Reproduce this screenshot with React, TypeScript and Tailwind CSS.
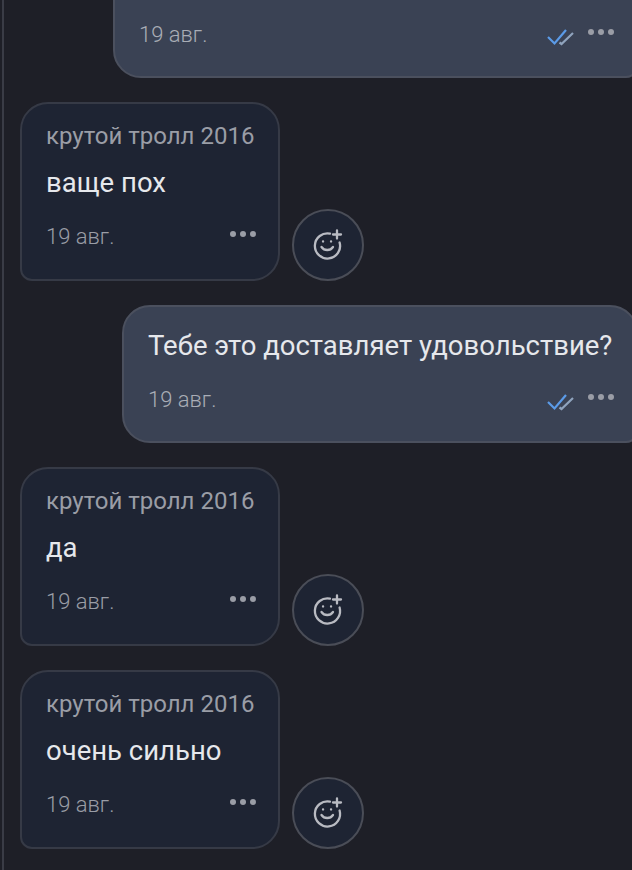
import React from 'react';

function Dots() {
  return (
    <div className="flex gap-[4px] mb-[6px]">
      <span className="w-[6px] h-[6px] rounded-full bg-[#9a9da6]" />
      <span className="w-[6px] h-[6px] rounded-full bg-[#9a9da6]" />
      <span className="w-[6px] h-[6px] rounded-full bg-[#9a9da6]" />
    </div>
  );
}

function Checks() {
  return (
    <svg width="28" height="20" viewBox="0 0 28 20" fill="none" strokeWidth="2.2" className="mr-[13px] mt-[4px]">
      <path d="M1 10 L7.5 16.5 L19 3" stroke="#5b9be8" />
      <path d="M12.5 15.5 L14.5 17 L26 6" stroke="#8fa3bd" />
    </svg>
  );
}

function ReactButton() {
  return (
    <button className="w-[72px] h-[72px] rounded-full border-2 border-[#4a4d57] bg-[#1e2433] flex items-center justify-center">
      <svg width="32" height="32" viewBox="0 0 32 32" fill="none" stroke="#b9bbc2" strokeWidth="2.3" strokeLinecap="round">
        <path d="M18 4.6 A12.6 12.6 0 1 0 27.6 13.5" />
        <path d="M25 1.5 V9.5 M21 5.5 H29" />
        <path d="M9.5 18 A7 7 0 0 0 21 18" />
        <path d="M11 12.5 h0.1 M19 12.5 h0.1" />
      </svg>
    </button>
  );
}

function Incoming({ text }: { text: string }) {
  return (
    <div className="flex items-end ml-[20px] gap-[12px]">
      <div className="w-[260px] h-[179px] rounded-[28px] rounded-bl-[12px] border-2 border-[#363a46] bg-[#1e2433] pl-[24px] pr-[22px] pt-[16px]">
        <div className="text-[24px] leading-[32px] text-[#9a9da6] whitespace-nowrap">крутой тролл 2016</div>
        <div className="text-[27.5px] leading-[36px] mt-[13px] text-[#e6e8ec]">{text}</div>
        <div className="flex justify-between items-center mt-[22px]">
          <span className="text-[22px] leading-[28px] font-light text-[#9a9da6]">19 авг.</span>
          <Dots />
        </div>
      </div>
      <ReactButton />
    </div>
  );
}

function Outgoing({ text, className }: { text?: string; className: string }) {
  return (
    <div className={`flex flex-col justify-end h-[138px] rounded-[28px] rounded-br-[12px] border-2 border-[#4b505e] bg-[#3a4254] pl-[24px] pb-[27px] mr-[-6px] ${className}`}>
      {text && <div className="text-[27.5px] leading-[36px] text-[#e6e8ec] whitespace-nowrap">{text}</div>}
      <div className="flex justify-between items-center mt-[22px]">
        <span className="text-[22px] leading-[28px] font-light text-[#a9adb6]">19 авг.</span>
        <div className="flex items-center mr-[22px]">
          <Checks />
          <Dots />
        </div>
      </div>
    </div>
  );
}

export default function App() {
  return (
    <div className="w-[632px] h-[870px] overflow-hidden bg-[#1e1f27] font-['Roboto',sans-serif]">
      <div className="ml-[2px] border-l-2 border-[#3a3c46] h-full">
        <div className="flex flex-col gap-[24px] ml-[-4px]">
          <Outgoing className="ml-[113px] mt-[-60px]" />
          <Incoming text="ваще пох" />
          <Outgoing className="ml-[122px]" text="Тебе это доставляет удовольствие?" />
          <Incoming text="да" />
          <Incoming text="очень сильно" />
        </div>
      </div>
    </div>
  );
}
